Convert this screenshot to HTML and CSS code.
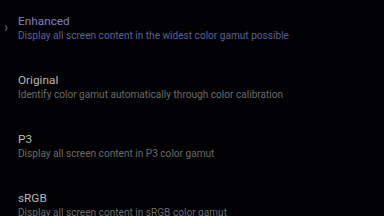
FILE: index.html
```html
<!DOCTYPE html>
<html lang="en">
<head>
    <meta charset="UTF-8">
    <meta name="viewport" content="width=device-width, initial-scale=1.0">
    <title>Screen Color Mode</title>
    <link rel="stylesheet" href="styles.css">
</head>
<body>
    <div class="mode-list">
        <div class="mode-item selected">
            <span class="chevron">&#8250;</span>
            <div class="mode-title">Enhanced</div>
            <div class="mode-desc">Display all screen content in the widest color gamut possible</div>
        </div>
        <div class="mode-item">
            <div class="mode-title">Original</div>
            <div class="mode-desc">Identify color gamut automatically through color calibration</div>
        </div>
        <div class="mode-item">
            <div class="mode-title">P3</div>
            <div class="mode-desc">Display all screen content in P3 color gamut</div>
        </div>
        <div class="mode-item">
            <div class="mode-title">sRGB</div>
            <div class="mode-desc">Display all screen content in sRGB color gamut</div>
        </div>
    </div>
</body>
</html>
```

FILE: styles.css
```css
body {
    margin: 0;
    background: #020204;
    font-family: Roboto, "Liberation Sans", sans-serif;
    overflow: hidden;
}
.mode-list {
    display: flex;
    flex-direction: column;
    gap: 31px;
    padding: 14px 0 0 18px;
}
.mode-item {
    position: relative;
}
.mode-title {
    font-size: 11.8px;
    line-height: 14px;
    color: #b8b8b8;
}
.mode-desc {
    font-size: 10.1px;
    line-height: 12px;
    margin-top: 2px;
    color: #6a6a6a;
}
.selected .mode-title {
    color: #7a80c8;
}
.selected .mode-desc {
    color: #5a6196;
}
.chevron {
    position: absolute;
    left: -14px;
    top: 6px;
    font-size: 14px;
    line-height: 14px;
    color: #5e6490;
}
```
